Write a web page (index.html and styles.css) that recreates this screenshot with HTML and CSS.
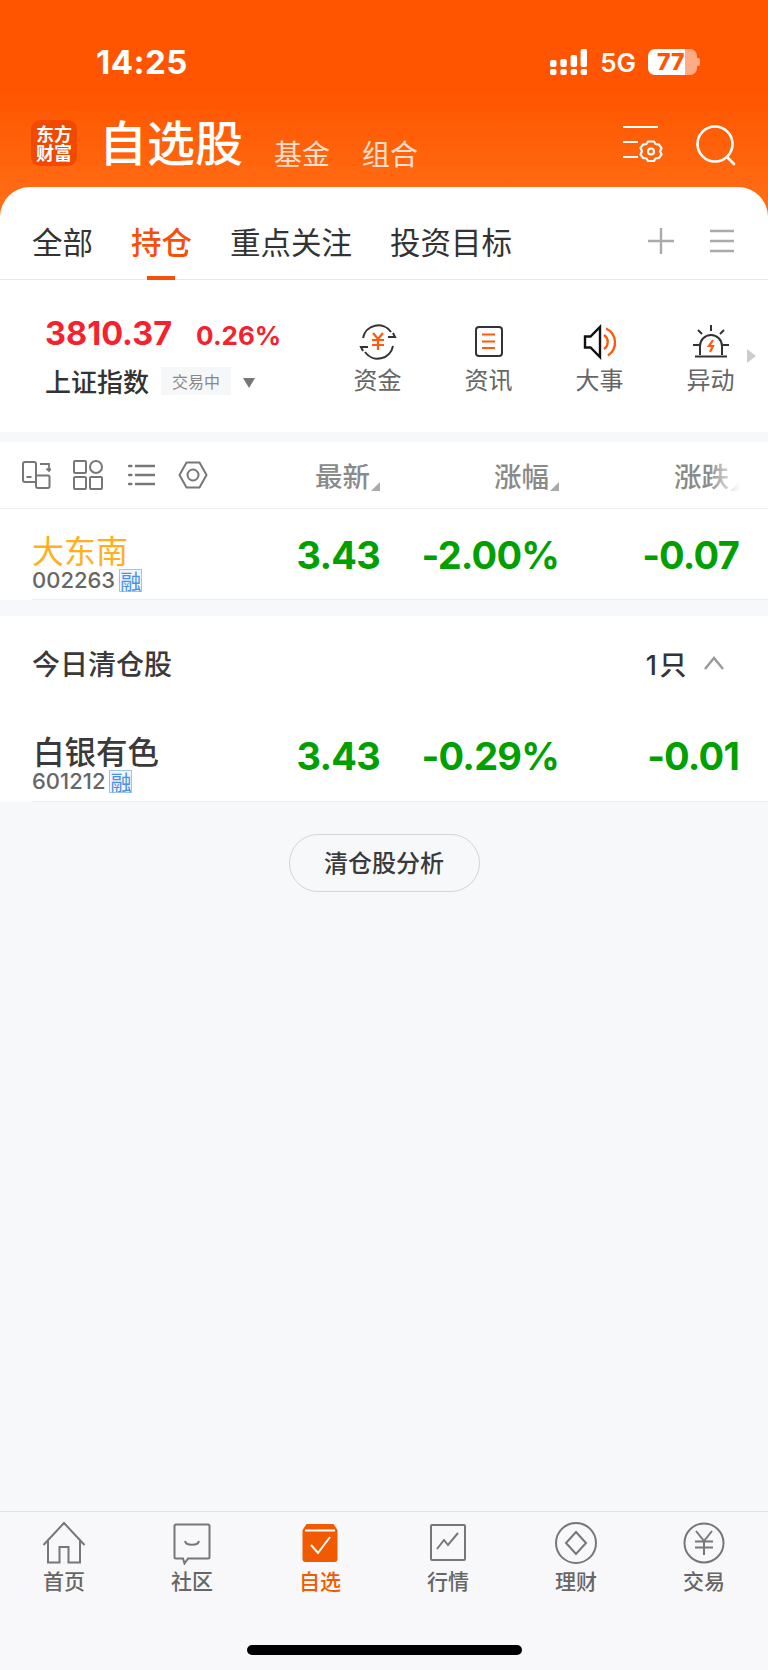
FILE: index.html
```html
<!DOCTYPE html>
<html lang="zh-CN">
<head>
  <meta charset="UTF-8" />
  <meta name="viewport" content="width=device-width, initial-scale=1.0"/>
  <title>自选股</title>
  <link rel="stylesheet" href="styles.css">
</head>
<body>
  <div class="app">
    <div class="top">
      <div class="status-bar">
        <span class="time">14:25</span>
        <div class="status-right">
          <svg class="signal" width="37" height="26" viewBox="0 0 37 26" fill="#fff">
            <rect x="0" y="11" width="6.5" height="7" rx="2"/>
            <rect x="10.3" y="10" width="6.5" height="8" rx="2"/>
            <rect x="20.6" y="6" width="6.5" height="12" rx="2"/>
            <rect x="30.6" y="0" width="6.5" height="18" rx="2"/>
            <rect x="0" y="20" width="6.5" height="6" rx="2"/>
            <rect x="10.3" y="20" width="6.5" height="6" rx="2"/>
            <rect x="20.6" y="20" width="6.5" height="6" rx="2"/>
            <rect x="30.6" y="20" width="6.5" height="6" rx="2"/>
          </svg>
          <span class="net">5G</span>
          <div class="battery">
            <span class="battery-num">77</span>
          </div>
        </div>
      </div>

      <div class="nav">
        <div class="logo"><span>东方</span><span>财富</span></div>
        <h1 class="nav-title">自选股</h1>
        <span class="nav-sub">基金</span>
        <span class="nav-sub">组合</span>
        <div class="nav-icons">
          <svg width="42" height="38" viewBox="0 0 42 38" fill="none" stroke="#fff" stroke-width="2.2">
            <path d="M1 2h35M1 17h15M1 32h15"/>
            <path d="M26 16.500h6l1.500 2.500 3.500.7 2.500 3.300-1.500 3.200 1.500 3.300-2.500 3.300-3.500.7-1.500 2.500h-6l-1.500-2.500-3.500-.7-2.500-3.300 1.500-3.300-1.500-3.200 2.500-3.300 3.500-.7z" stroke-linejoin="round"/>
            <circle cx="29" cy="26.500" r="3"/>
          </svg>
          <svg width="42" height="42" viewBox="0 0 42 42" fill="none" stroke="#fff" stroke-width="2.6">
            <circle cx="19" cy="19" r="17.500"/>
            <path d="M31 32l7 7" stroke-linecap="round"/>
          </svg>
        </div>
      </div>

      <div class="tabs">
        <span class="tab">全部</span>
        <span class="tab tab-active">持仓</span>
        <span class="tab">重点关注</span>
        <span class="tab">投资目标</span>
        <div class="tab-tools">
          <svg width="26" height="26" viewBox="0 0 26 26" stroke="#aaa" stroke-width="2.4"><path d="M13 0v26M0 13h26"/></svg>
          <svg width="24" height="24" viewBox="0 0 24 24" stroke="#aaa" stroke-width="2.4"><path d="M0 2h24M0 12h24M0 22h24"/></svg>
        </div>
      </div>
    </div>

    <div class="index-bar">
      <div class="index-info">
        <div class="index-nums">
          <span class="index-price">3810.37</span>
          <span class="index-pct">0.26%</span>
        </div>
        <div class="index-name-row">
          <span class="index-name">上证指数</span>
          <span class="index-tag">交易中</span>
          <span class="caret-down"></span>
        </div>
      </div>
      <div class="shortcuts">
        <div class="shortcut">
          <svg width="40" height="36" viewBox="0 0 40 36" fill="none" stroke="#333" stroke-width="2">
            <path d="M5 14a15.500 15.500 0 0 1 28-6M35 22a15.500 15.500 0 0 1-28 6"/>
            <path d="M30 13h7l-2-4M10 23H3l2 4"/>
            <path d="M15 9l5 6 5-6M20 15v11M14 16h12M14 21h12" stroke="#ff5a0a" stroke-width="2.2"/>
          </svg>
          <span>资金</span>
        </div>
        <div class="shortcut">
          <svg width="40" height="36" viewBox="0 0 40 36" fill="none" stroke-width="2">
            <rect x="7" y="3" width="26" height="29" rx="3" stroke="#333"/>
            <path d="M13 10.500h13M13 17.500h13M13 24h13" stroke="#ff5a0a" stroke-width="2.2"/>
          </svg>
          <span>资讯</span>
        </div>
        <div class="shortcut">
          <svg width="40" height="36" viewBox="0 0 40 36" fill="none" stroke-width="2.4">
            <path d="M5 12.500h5.500L20 3v30l-9.500-9.500H5z" stroke="#111"/>
            <path d="M24 11a8.500 8.500 0 0 1 0 14M26 4.500a15.500 15.500 0 0 1 2 27" stroke="#ff5a0a"/>
          </svg>
          <span>大事</span>
        </div>
        <div class="shortcut">
          <svg width="40" height="36" viewBox="0 0 40 36" fill="none" stroke="#333" stroke-width="2">
            <path d="M9 31V22a11 11 0 0 1 22 0v9M4 32.500h32"/>
            <path d="M20 1v6M7 6l4 4M33 6l-4 4M2 21h6M32 21h6"/>
            <path d="M22 16l-4 6h4l-3 6" stroke="#ff5a0a" stroke-width="2.2"/>
          </svg>
          <span>异动</span>
        </div>
      </div>
      <span class="more-arrow"></span>
    </div>

    <div class="list-head">
      <div class="head-tools">
        <svg width="30" height="30" viewBox="0 0 30 30" fill="none" stroke="#777" stroke-width="2">
          <path d="M14 22H4a2 2 0 0 1-2-2V4a2 2 0 0 1 2-2h9a2 2 0 0 1 2 2v22a2 2 0 0 0 2 2h10a1.500 1.500 0 0 0 1.500-1.500V17a1.500 1.500 0 0 0-1.500-1.500H15"/>
          <path d="M5.500 17h5M19 4h9v7M25.500 8.500L28 11l2-2.500" stroke-width="1.8"/>
        </svg>
        <svg width="30" height="30" viewBox="0 0 30 30" fill="none" stroke="#777" stroke-width="2">
          <rect x="1" y="1" width="12" height="12" rx="1"/>
          <circle cx="23" cy="7" r="6"/>
          <rect x="1" y="17" width="12" height="12" rx="1"/>
          <rect x="17" y="17" width="12" height="12" rx="1"/>
        </svg>
        <svg class="list-icon" width="28" height="30" viewBox="0 0 28 30" fill="none" stroke="#777" stroke-width="2.4">
          <path d="M7 6h20M7 15h20M7 24h20"/>
          <path d="M1 6h2.400M1 15h2.400M1 24h2.400" stroke-linecap="round"/>
        </svg>
        <svg width="30" height="30" viewBox="0 0 30 30" fill="none" stroke="#777" stroke-width="2">
          <path d="M8.500 2.500h13L28.500 15l-7 12.500h-13L1.500 15z" stroke-linejoin="round"/>
          <circle cx="15" cy="15" r="5.500"/>
        </svg>
      </div>
      <div class="col-head col-a">最新</div>
      <div class="col-head col-b">涨幅</div>
      <div class="col-head col-c">涨跌</div>
    </div>

    <div class="stock-row">
      <div class="stock-name-cell">
        <div class="stock-name stock-name-hot">大东南</div>
        <div class="stock-code">002263<span class="margin-tag">融</span></div>
      </div>
      <div class="val col-a">3.43</div>
      <div class="val col-b">-2.00%</div>
      <div class="val col-c">-0.07</div>
    </div>

    <div class="cleared-head">
      <span class="cleared-title">今日清仓股</span>
      <div class="cleared-count">
        <span>1只</span>
        <svg width="22" height="16" viewBox="0 0 22 16" fill="none" stroke="#999" stroke-width="2.4"><path d="M2 14L11 3l9 11"/></svg>
      </div>
    </div>

    <div class="stock-row stock-row-cleared">
      <div class="stock-name-cell">
        <div class="stock-name stock-name-large">白银有色</div>
        <div class="stock-code">601212<span class="margin-tag">融</span></div>
      </div>
      <div class="val col-a">3.43</div>
      <div class="val col-b">-0.29%</div>
      <div class="val col-c">-0.01</div>
    </div>

    <div class="main-rest">
      <button class="analyse-btn">清仓股分析</button>
    </div>

    <div class="tabbar">
      <div class="tabbar-item">
        <svg width="44" height="44" viewBox="0 0 44 44" fill="none" stroke="#777" stroke-width="2">
          <path d="M1.500 24L22 2l20.500 22M6 20v21.500h11.500V26h9v15.500H38V20"/>
        </svg>
        <span>首页</span>
      </div>
      <div class="tabbar-item">
        <svg width="44" height="44" viewBox="0 0 44 44" fill="none" stroke="#777" stroke-width="2">
          <path d="M6 3.500h32a1.500 1.500 0 0 1 1.500 1.500v31a1.500 1.500 0 0 1-1.500 1.500H18l-3.500 5-1.500-5H6A1.500 1.500 0 0 1 4.500 36V5A1.500 1.500 0 0 1 6 3.500z"/>
          <path d="M15 20c1 5 13 5 14 0"/>
        </svg>
        <span>社区</span>
      </div>
      <div class="tabbar-item tabbar-active">
        <svg width="44" height="44" viewBox="0 0 44 44">
          <path d="M8.500 3h27l4 6v29a3 3 0 0 1-3 3h-29a3 3 0 0 1-3-3V9z" fill="#f05a00"/>
          <path d="M7 9.500h30" stroke="#fff" stroke-width="2"/>
          <path d="M13 24l7 8 12-16" fill="none" stroke="#fff" stroke-width="2"/>
        </svg>
        <span>自选</span>
      </div>
      <div class="tabbar-item">
        <svg width="44" height="44" viewBox="0 0 44 44" fill="none" stroke="#777" stroke-width="2">
          <rect x="5" y="4" width="34" height="35" rx="1"/>
          <path d="M11 28l7-9 4 5 10-12"/>
        </svg>
        <span>行情</span>
      </div>
      <div class="tabbar-item">
        <svg width="44" height="44" viewBox="0 0 44 44" fill="none" stroke="#777" stroke-width="2">
          <circle cx="22" cy="22" r="20"/>
          <path d="M22 11l10 11-10 11-10-11z"/>
        </svg>
        <span>理财</span>
      </div>
      <div class="tabbar-item">
        <svg width="44" height="44" viewBox="0 0 44 44" fill="none" stroke="#777" stroke-width="2">
          <circle cx="22" cy="22" r="19.500"/>
          <path d="M14 10l8 10 8-10M22 20v14M13 20.500h18M13 26.500h18"/>
        </svg>
        <span>交易</span>
      </div>
      <div class="home-bar"></div>
    </div>
  </div>
</body>
</html>
```

FILE: styles.css
```css
* {
  margin: 0;
  padding: 0;
  box-sizing: border-box;
}

body {
  font-family: "Noto Sans CJK SC", "Liberation Sans", sans-serif;
  background: #f7f8fa;
  color: #333;
}

.app {
  display: flex;
  flex-direction: column;
  width: 768px;
  height: 1670px;
  overflow: hidden;
}

.top {
  background: linear-gradient(#ff5500 0, #ff5500 90px, #ff7219 225px);
}

.status-bar {
  display: flex;
  justify-content: space-between;
  align-items: center;
  height: 120px;
  padding: 4px 71px 0 96px;
}

.time {
  font-family: Inter, "Liberation Sans", sans-serif;
  font-size: 33px;
  font-weight: 700;
  letter-spacing: 0.5px;
  color: #fff;
}

.status-right {
  display: flex;
  align-items: center;
}

.net {
  margin-left: 13px;
  font-family: Inter, "Liberation Sans", sans-serif;
  font-size: 26px;
  font-weight: 600;
  color: #fff;
}

.battery {
  position: relative;
  width: 49px;
  height: 26px;
  margin-left: 12px;
  padding-left: 9px;
  border-radius: 7px;
  background: linear-gradient(90deg, #fff 0, #fff 37px, #ffab85 37px);
}

.battery::after {
  content: "";
  position: absolute;
  right: -3px;
  top: 9px;
  width: 3px;
  height: 8px;
  border-radius: 0 2px 2px 0;
  background: #ffab85;
}

.battery-num {
  display: block;
  font-family: Inter, "Liberation Sans", sans-serif;
  font-size: 23px;
  font-weight: 800;
  line-height: 26px;
  color: #ff5500;
}

.nav {
  display: flex;
  align-items: flex-start;
  height: 67px;
  padding: 0 30px 0 31px;
}

.logo {
  display: flex;
  flex-direction: column;
  align-items: center;
  justify-content: center;
  width: 46px;
  height: 46px;
  border-radius: 9px;
  background: #f04a00;
  color: #fff;
  font-size: 18px;
  font-weight: 700;
  line-height: 19px;
}

.nav-title {
  margin: -10px 31px 0 22px;
  font-size: 48px;
  font-weight: 500;
  line-height: 60px;
  color: #fff;
}

.nav-sub {
  margin: 14px 32px 0 0;
  font-size: 28px;
  line-height: 38px;
  color: #ffe0cc;
}

.nav-icons {
  display: flex;
  align-items: flex-start;
  gap: 32px;
  margin: 5px 0 0 auto;
}

.tabs {
  display: flex;
  align-items: center;
  height: 93px;
  padding: 16px 34px 0 32px;
  background: #fff;
  border-radius: 30px 30px 0 0;
  border-bottom: 1px solid #e8e8e8;
}

.tab {
  position: relative;
  margin-right: 38px;
  font-size: 30.5px;
  line-height: 76px;
  color: #333;
}

.tab-active {
  color: #f5500a;
  font-weight: 500;
}

.tab-active::after {
  content: "";
  position: absolute;
  left: 16px;
  bottom: -1px;
  width: 28px;
  height: 4px;
  background: #f5500a;
}

.tab-tools {
  display: flex;
  align-items: center;
  gap: 36px;
  margin-left: auto;
}

.index-bar {
  position: relative;
  display: flex;
  height: 152px;
  background: #fff;
}

.index-info {
  width: 322px;
  padding: 30px 0 0 45px;
}

.index-nums {
  display: flex;
  align-items: baseline;
  gap: 24px;
  font-family: Inter, "Liberation Sans", sans-serif;
  font-weight: 700;
  color: #f5222d;
}

.index-price {
  font-size: 32.5px;
  line-height: 48px;
}

.index-pct {
  font-size: 26px;
}

.index-name-row {
  display: flex;
  align-items: center;
  margin-top: 3px;
}

.index-name {
  font-size: 26px;
  font-weight: 500;
  line-height: 40px;
}

.index-tag {
  margin-left: 12px;
  padding: 0 11px;
  background: #f6f7f9;
  font-size: 16px;
  line-height: 28px;
  color: #888;
}

.caret-down {
  width: 12px;
  height: 10px;
  margin: 4px 0 0 12px;
  background: #777;
  clip-path: polygon(0 0, 100% 0, 50% 100%);
}

.shortcuts {
  display: grid;
  grid-template-columns: repeat(4, 111px);
}

.shortcut {
  display: flex;
  flex-direction: column;
  align-items: center;
  padding-top: 44px;
  font-size: 24px;
  line-height: 38px;
  color: #666;
}

.more-arrow {
  position: absolute;
  left: 747px;
  top: 69px;
  width: 9px;
  height: 14px;
  background: #ccc;
  clip-path: polygon(0 0, 100% 50%, 0 100%);
}

.list-head {
  position: relative;
  display: flex;
  align-items: center;
  height: 67px;
  margin-top: 10px;
  padding: 0 29px 0 21px;
  background: #fff;
  border-bottom: 1px solid #eee;
}

.list-head::after {
  content: "";
  position: absolute;
  right: 24px;
  top: 0;
  width: 36px;
  height: 66px;
  background: linear-gradient(90deg, rgba(255, 255, 255, 0), #fff 90%);
}

.head-tools {
  display: flex;
  align-items: center;
  gap: 22px;
  flex: 1;
}

.list-icon {
  margin-left: 3px;
}

.col-a {
  width: 100px;
}

.col-b {
  width: 179px;
}

.col-c {
  width: 180px;
}

.col-head {
  display: flex;
  justify-content: flex-end;
  align-items: flex-end;
  font-size: 27.5px;
  font-weight: 500;
  line-height: 40px;
  color: #8a8a8a;
}

.col-head::after {
  content: "";
  width: 9px;
  height: 9px;
  margin: 0 0 4px 1px;
  background: #aaa;
  clip-path: polygon(100% 0, 100% 100%, 0 100%);
}

.stock-row {
  display: flex;
  align-items: center;
  height: 91px;
  padding: 0 29px 0 32px;
  background: linear-gradient(#eee, #eee) 32px 100% / 100% 1px no-repeat #fff;
}

.stock-row-cleared {
  height: 92px;
}

.stock-name-cell {
  flex: 1;
  align-self: flex-start;
  padding-top: 21px;
}

.stock-name {
  font-size: 32px;
  line-height: 38px;
  color: #333;
}

.stock-name-hot {
  color: #ffb020;
}

.stock-name-large {
  margin-left: 1px;
  font-size: 31.5px;
  font-weight: 500;
  color: #3a3a3a;
}

.stock-code {
  display: flex;
  align-items: center;
  gap: 4px;
  font-family: Inter, "Liberation Sans", sans-serif;
  font-size: 22px;
  font-weight: 500;
  line-height: 24px;
  color: #666;
}

.margin-tag {
  width: 23px;
  height: 23px;
  border: 1px solid #9cc4f2;
  background: #eef5fd;
  font-family: "Noto Sans CJK SC", sans-serif;
  font-size: 21px;
  font-weight: 400;
  line-height: 20px;
  text-align: center;
  color: #4a90e2;
}

.val {
  font-family: Inter, "Liberation Sans", sans-serif;
  font-size: 38px;
  font-weight: 700;
  letter-spacing: -0.8px;
  text-align: right;
  color: #00a000;
}

.cleared-head {
  display: flex;
  justify-content: space-between;
  align-items: center;
  height: 94px;
  margin-top: 16px;
  padding: 0 43px 0 32px;
  background: #fff;
}

.cleared-title {
  font-size: 28px;
  font-weight: 500;
  color: #3a3a3a;
}

.cleared-count {
  display: flex;
  align-items: center;
  gap: 14px;
  font-family: Inter, "Noto Sans CJK SC", sans-serif;
  font-size: 27px;
  font-weight: 500;
  letter-spacing: 2.5px;
}

.main-rest {
  flex: 1;
  display: flex;
  justify-content: center;
  align-items: flex-start;
  padding-top: 32px;
}

.analyse-btn {
  width: 191px;
  height: 58px;
  padding-bottom: 3px;
  border: 1px solid #d4d5d8;
  border-radius: 29px;
  background: #f7f8fa;
  font-family: inherit;
  font-size: 24px;
  font-weight: 500;
  color: #3a3a3a;
}

.tabbar {
  position: relative;
  display: grid;
  grid-template-columns: repeat(6, 128px);
  height: 159px;
  padding-top: 9px;
  background: #f8f8fa;
  border-top: 1px solid #e2e2e4;
}

.tabbar-item {
  display: flex;
  flex-direction: column;
  align-items: center;
  font-size: 21px;
  font-weight: 500;
  line-height: 30px;
  color: #666;
}

.tabbar-active {
  color: #f05a00;
}

.home-bar {
  position: absolute;
  left: 247px;
  bottom: 15px;
  width: 275px;
  height: 10px;
  border-radius: 5px;
  background: #000;
}
```
